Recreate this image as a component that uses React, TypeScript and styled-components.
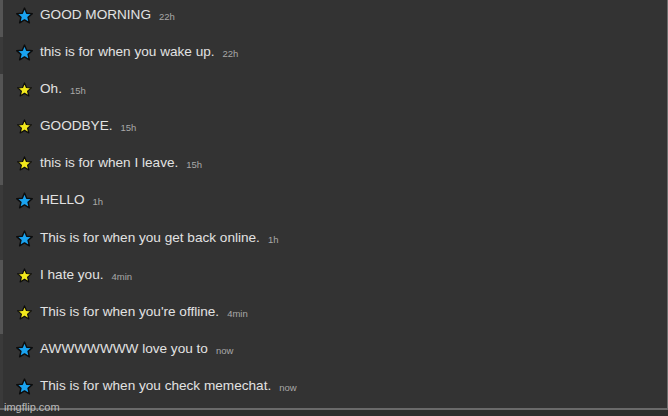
import React from "react";
import styled, { createGlobalStyle } from "styled-components";

const GlobalStyle = createGlobalStyle`
  html, body {
    margin: 0;
    padding: 0;
    background: #333333;
  }
  body {
    font-family: "Liberation Sans", Arial, sans-serif;
  }
`;

const Frame = styled.div`
  position: relative;
  width: 668px;
  height: 416px;
  overflow: hidden;
  background: #333333;
  display: flex;
  flex-direction: column;
`;

const Body = styled.div`
  flex: 1;
  display: flex;
  border-right: 1px solid #6e6e6e;
  position: relative;
  &::after {
    content: "";
    position: absolute;
    top: 0;
    right: -2px;
    width: 1px;
    height: 100%;
    background: #1a1a1a;
  }
`;

const List = styled.ul`
  list-style: none;
  margin: 0;
  padding: 0;
  flex: 1;
  display: flex;
  flex-direction: column;
`;

const Row = styled.li<{ $lit: boolean }>`
  height: 37.1px;
  box-sizing: border-box;
  padding: 6px 0 0 12px;
  display: flex;
  align-items: flex-start;
  border-left: 3px solid ${(p) => (p.$lit ? "#555555" : "#3a3a3a")};
`;

const StarBox = styled.span`
  width: 18px;
  height: 19px;
  display: flex;
  align-items: center;
  justify-content: center;
  margin-right: 7px;
`;

const Message = styled.span`
  font-size: 13.6px;
  line-height: 18px;
  color: #e2e2e2;
`;

const Time = styled.span`
  font-size: 9.5px;
  line-height: 21px;
  color: #a8a8a8;
  margin-left: 8px;
`;

const Footer = styled.div`
  height: 10px;
  border-top: 2px solid #6a6a6a;
  background: #2e2e2e;
`;

const Watermark = styled.span`
  position: absolute;
  left: 4px;
  bottom: 3px;
  font-size: 11px;
  color: #d0d0d0;
  opacity: 0.85;
`;

const Star = ({ kind }: { kind: "blue" | "yellow" }) => {
  const size = kind === "blue" ? 17 : 15;
  return (
    <svg width={size} height={size} viewBox="0 0 24 24">
      <path
        d="M12 1.5l3.1 7.3 7.9.6-6 5.2 1.9 7.7L12 18.2l-6.9 4.1 1.9-7.7-6-5.2 7.9-.6z"
        fill={kind === "blue" ? "#1aa3f0" : "#f2e81c"}
        stroke="#0c0c0c"
        strokeWidth={2}
        strokeLinejoin="round"
      />
    </svg>
  );
};

type Item = { text: string; time: string; star: "blue" | "yellow"; lit: boolean };

const items: Item[] = [
  { text: "GOOD MORNING", time: "22h", star: "blue", lit: true },
  { text: "this is for when you wake up.", time: "22h", star: "blue", lit: false },
  { text: "Oh.", time: "15h", star: "yellow", lit: true },
  { text: "GOODBYE.", time: "15h", star: "yellow", lit: true },
  { text: "this is for when I leave.", time: "15h", star: "yellow", lit: true },
  { text: "HELLO", time: "1h", star: "blue", lit: false },
  { text: "This is for when you get back online.", time: "1h", star: "blue", lit: false },
  { text: "I hate you.", time: "4min", star: "yellow", lit: true },
  { text: "This is for when you're offline.", time: "4min", star: "yellow", lit: true },
  { text: "AWWWWWWW love you to", time: "now", star: "blue", lit: false },
  { text: "This is for when you check memechat.", time: "now", star: "blue", lit: false },
];

export default function App() {
  return (
    <>
      <GlobalStyle />
      <Frame>
        <Body>
          <List>
            {items.map((item, i) => (
              <Row key={i} $lit={item.lit}>
                <StarBox>
                  <Star kind={item.star} />
                </StarBox>
                <Message>{item.text}</Message>
                <Time>{item.time}</Time>
              </Row>
            ))}
          </List>
        </Body>
        <Footer />
        <Watermark>imgflip.com</Watermark>
      </Frame>
    </>
  );
}
